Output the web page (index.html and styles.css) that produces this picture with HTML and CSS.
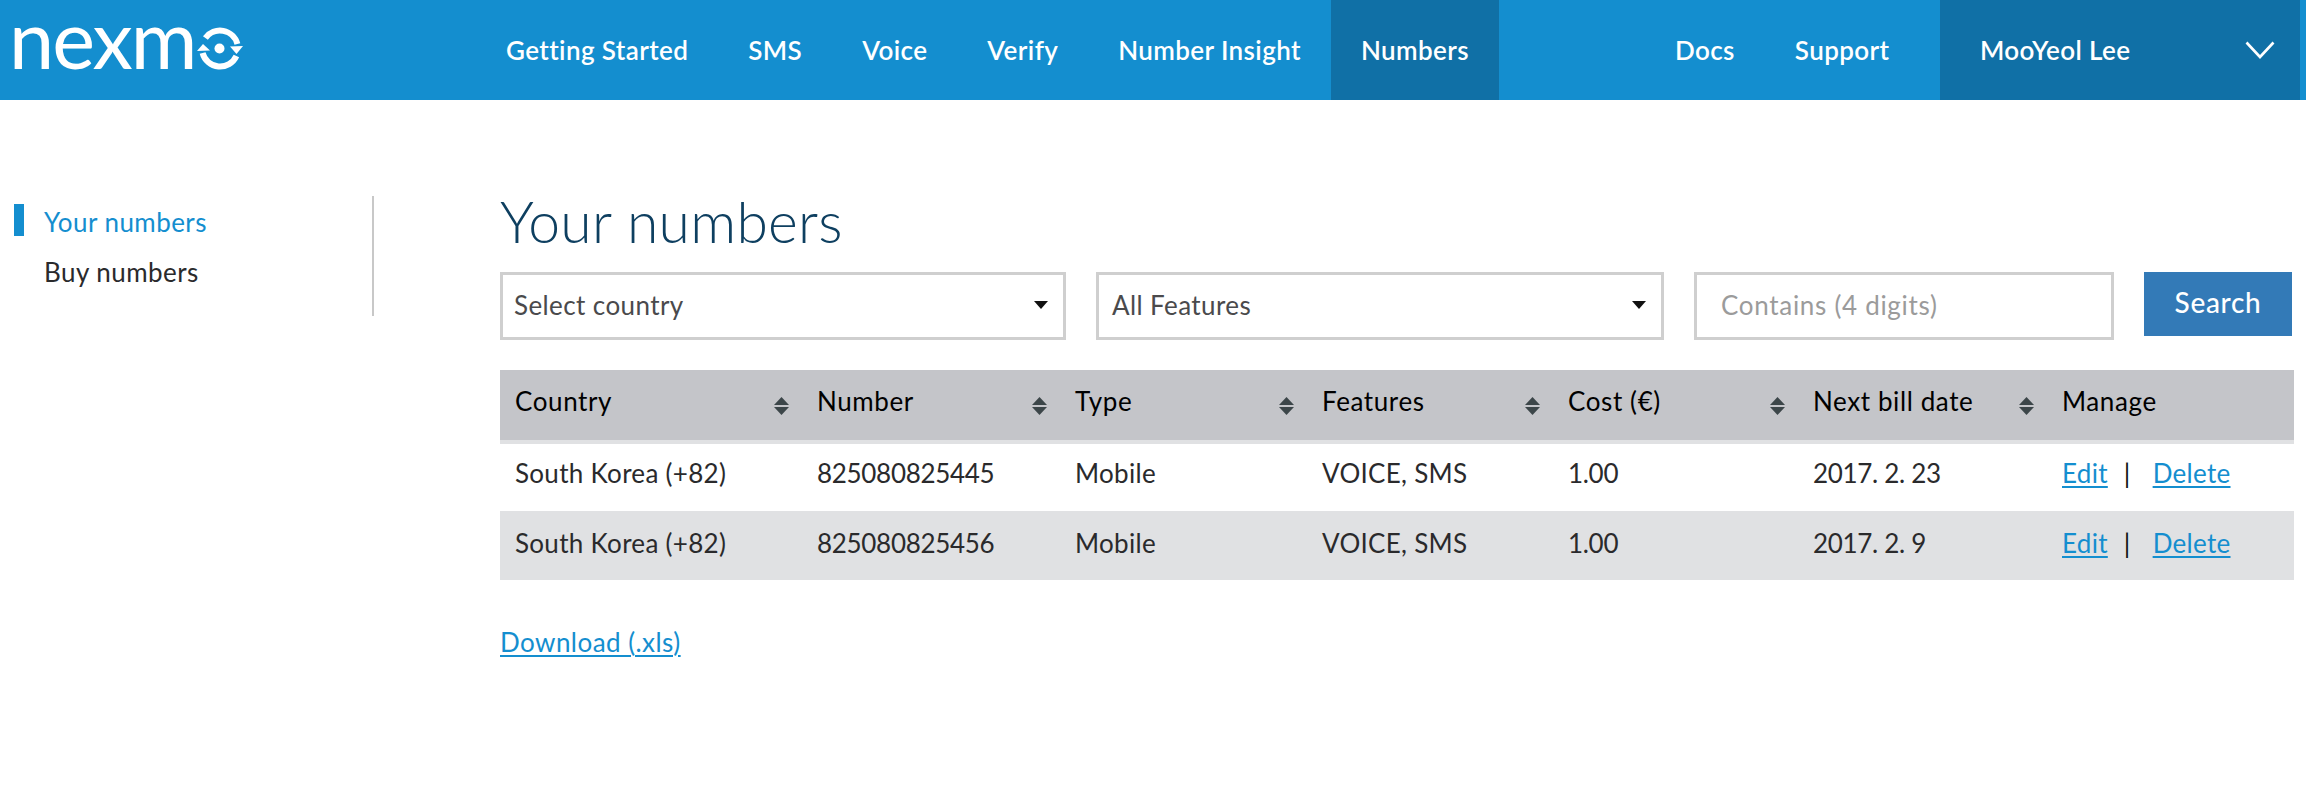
FILE: index.html
```html
<!DOCTYPE html>
<html lang="en">
<head>
<meta charset="utf-8">
<title>Your numbers</title>
<link rel="stylesheet" href="styles.css">
</head>
<body>
<header class="topbar">
  <div class="logo">
    <svg class="logo-mark" width="246" height="100" viewBox="0 0 246 100" role="img" aria-label="nexmo">
      <text class="logo-text" x="9" y="69">nexm</text>
      <g transform="translate(197 27)">
        <path d="M8.400 11 A18 18 0 0 1 40.400 17" fill="none" stroke="#fff" stroke-width="6"/>
        <path d="M39.400 29 A18 18 0 0 1 5.600 26" fill="none" stroke="#fff" stroke-width="6"/>
        <path d="M33 19.500 L46 19 L39.500 27 Z" fill="#fff"/>
        <path d="M6 17 L0 24 L13 23.500 Z" fill="#fff"/>
        <circle cx="22.500" cy="21.500" r="5" fill="#fff"/>
      </g>
    </svg>
  </div>
  <nav class="nav nav-main">
    <a class="nav-item">Getting Started</a>
    <a class="nav-item">SMS</a>
    <a class="nav-item">Voice</a>
    <a class="nav-item">Verify</a>
    <a class="nav-item">Number Insight</a>
    <a class="nav-item active">Numbers</a>
  </nav>
  <nav class="nav nav-side">
    <a class="nav-item">Docs</a>
    <a class="nav-item">Support</a>
  </nav>
  <div class="user">
    <span>MooYeol Lee</span>
    <svg width="30" height="18" viewBox="0 0 30 18" aria-hidden="true"><path d="M1.500 1.500 L15 16 L28.500 1.500" fill="none" stroke="#fff" stroke-width="2.600"/></svg>
  </div>
</header>
<div class="page">
  <aside class="sidebar">
    <a class="side-link current">Your numbers</a>
    <a class="side-link">Buy numbers</a>
  </aside>
  <main class="content">
    <h1 class="title">Your numbers</h1>
    <form class="filters">
      <div class="select select-a"><span>Select country</span><svg width="14" height="8" viewBox="0 0 14 8" aria-hidden="true"><path d="M0 0H14L7 8Z" fill="#111"/></svg></div>
      <div class="select select-b"><span>All Features</span><svg width="14" height="8" viewBox="0 0 14 8" aria-hidden="true"><path d="M0 0H14L7 8Z" fill="#111"/></svg></div>
      <input class="contains" type="text" placeholder="Contains (4 digits)">
      <button class="search" type="button">Search</button>
    </form>
    <table class="numbers">
      <colgroup>
        <col class="c1"><col class="c2"><col class="c3"><col class="c4"><col class="c5"><col class="c6"><col class="c7">
      </colgroup>
      <thead>
        <tr>
          <th><div class="th"><span>Country</span><svg class="sort" width="15" height="18" viewBox="0 0 15 18" aria-hidden="true"><path d="M7.500 0L15 8H0Z M0 10H15L7.500 18Z" fill="#3c4649"/></svg></div></th>
          <th><div class="th"><span>Number</span><svg class="sort" width="15" height="18" viewBox="0 0 15 18" aria-hidden="true"><path d="M7.500 0L15 8H0Z M0 10H15L7.500 18Z" fill="#3c4649"/></svg></div></th>
          <th><div class="th"><span>Type</span><svg class="sort" width="15" height="18" viewBox="0 0 15 18" aria-hidden="true"><path d="M7.500 0L15 8H0Z M0 10H15L7.500 18Z" fill="#3c4649"/></svg></div></th>
          <th><div class="th"><span>Features</span><svg class="sort" width="15" height="18" viewBox="0 0 15 18" aria-hidden="true"><path d="M7.500 0L15 8H0Z M0 10H15L7.500 18Z" fill="#3c4649"/></svg></div></th>
          <th><div class="th"><span>Cost (€)</span><svg class="sort" width="15" height="18" viewBox="0 0 15 18" aria-hidden="true"><path d="M7.500 0L15 8H0Z M0 10H15L7.500 18Z" fill="#3c4649"/></svg></div></th>
          <th><div class="th"><span>Next bill date</span><svg class="sort" width="15" height="18" viewBox="0 0 15 18" aria-hidden="true"><path d="M7.500 0L15 8H0Z M0 10H15L7.500 18Z" fill="#3c4649"/></svg></div></th>
          <th><div class="th"><span>Manage</span></div></th>
        </tr>
      </thead>
      <tbody>
        <tr>
          <td>South Korea (+82)</td><td class="num">825080825445</td><td>Mobile</td><td>VOICE, SMS</td><td class="num">1.00</td><td class="num">2017. 2. 23</td>
          <td><a class="link">Edit</a><span class="sep">|</span><a class="link">Delete</a></td>
        </tr>
        <tr class="alt">
          <td>South Korea (+82)</td><td class="num">825080825456</td><td>Mobile</td><td>VOICE, SMS</td><td class="num">1.00</td><td class="num">2017. 2. 9</td>
          <td><a class="link">Edit</a><span class="sep">|</span><a class="link">Delete</a></td>
        </tr>
      </tbody>
    </table>
    <a class="link download">Download (.xls)</a>
  </main>
</div>
</body>
</html>
```
FILE: styles.css
```css
* { box-sizing: border-box; }
html, body { margin: 0; padding: 0; background: #fff; }
body { font-family: "Lato", "Liberation Sans", sans-serif; font-size: 26px; letter-spacing: 0.3px; color: #2a2a2c; min-height: 800px; overflow: hidden; }

.topbar { display: flex; height: 100px; background: #148ecf; color: #fff; padding-right: 6px; }
.logo { width: 476px; height: 100px; }
.logo-mark { display: block; }
.logo-text { font-size: 81px; letter-spacing: -2px; fill: #fff; }
.nav { display: flex; }
.nav-item { display: flex; align-items: center; padding: 0 30px; font-weight: 600; letter-spacing: 0.4px; }
.nav-item.active { background: #1070a6; }
.nav-side { margin-left: 146px; }
.user { width: 360px; margin-left: auto; display: flex; align-items: center; justify-content: space-between; background: #1070a6; padding: 0 25px 0 40px; font-weight: 600; letter-spacing: 0.4px; }

.page { display: flex; padding: 96px 12px 0 14px; }
.sidebar { width: 360px; height: 120px; border-right: 2px solid #c8c8c8; padding-top: 8px; display: flex; flex-direction: column; gap: 18px; flex-shrink: 0; }
.side-link { display: block; height: 32px; line-height: 36px; padding-left: 30px; letter-spacing: 0.45px; color: #2a2a2c; }
.side-link.current { color: #148ecf; border-left: 10px solid #148ecf; padding-left: 20px; }

.content { margin-left: 126px; flex: 1; min-width: 0; }
.title { margin: 0 0 26px; font-size: 57px; line-height: 50px; font-weight: 300; color: #0e3f60; }
.filters { display: flex; align-items: flex-start; gap: 30px; }
.select { display: flex; align-items: center; justify-content: space-between; height: 68px; border: 3px solid #cfcfcf; padding: 0 15px 3px 11px; letter-spacing: 0.4px; color: #4a4a4c; }
.select-a { width: 566px; }
.select-b { width: 568px; padding-left: 13px; }
.contains { width: 420px; height: 68px; border: 3px solid #cfcfcf; padding: 0 24px 2px; font: inherit; letter-spacing: 0.7px; color: #999; background: #fff; outline: none; }
.contains::placeholder { color: #9b9b9b; opacity: 1; }
.search { width: 148px; height: 64px; padding: 0 0 5px; border: 0; background: #337ab7; color: #fff; font: inherit; letter-spacing: 0.7px; font-size: 28px; font-weight: 500; }

.numbers { margin-top: 30px; width: 1794px; table-layout: fixed; border-collapse: collapse; }
.c1 { width: 302px; } .c2 { width: 258px; } .c3 { width: 247px; } .c4 { width: 246px; } .c5 { width: 245px; } .c6 { width: 249px; } .c7 { width: 247px; }
.numbers th { height: 72px; background: #c4c5c9; border-bottom: 4px solid #e0e1e3; padding: 0 13px 9px 15px; text-align: left; font-weight: 400; color: #000; font-size: 26px; letter-spacing: 0.6px; }
.th { display: flex; align-items: center; justify-content: space-between; }
.sort { margin-top: 10px; }
.numbers td { height: 70px; padding: 0 15px 10px; border-bottom: 2px solid #e0e1e3; white-space: nowrap; }
.numbers td.num { letter-spacing: -0.3px; }
.numbers tbody tr:last-child td { height: 68px; padding-bottom: 8px; border-bottom: 0; }
.numbers tr.alt td { background: #e0e1e3; }
.link { color: #148ecf; text-decoration: underline; text-decoration-thickness: 2px; text-underline-offset: 3px; }
.sep { margin: 0 22px 0 16px; color: #111; }
.download { display: inline-block; margin-top: 46px; letter-spacing: 0.45px; }
```
